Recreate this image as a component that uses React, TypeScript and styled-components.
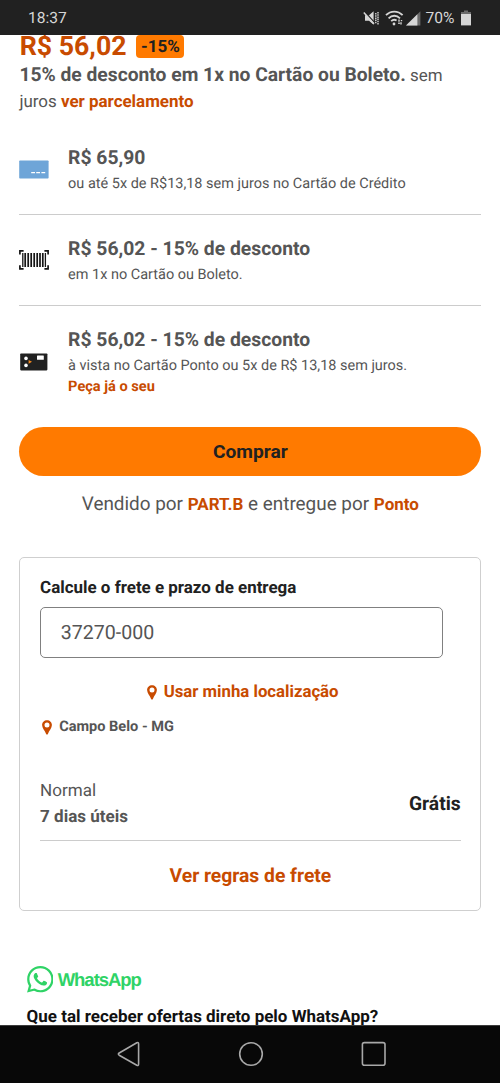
import React from "react";
import styled, { createGlobalStyle } from "styled-components";
import { SiWhatsapp } from "react-icons/si";

const rust = "#c84b00";
const grey = "#555555";

const GlobalStyle = createGlobalStyle`
  * { box-sizing: border-box; }
  html, body { margin: 0; padding: 0; background: #fff; }
  body {
    font-family: Roboto, "Liberation Sans", sans-serif;
    color: ${grey};
    text-rendering: geometricPrecision;
    -webkit-font-smoothing: antialiased;
  }
`;

const Phone = styled.div`
  width: 500px;
  height: 1083px;
  display: flex;
  flex-direction: column;
  overflow: hidden;
  background: #fff;
`;

const StatusBar = styled.header`
  flex: none;
  height: 35px;
  padding: 1px 29.5px 0 28px;
  display: flex;
  align-items: center;
  justify-content: space-between;
  background: #212121;
  color: #d6d6d6;
  font-size: 15.6px;
`;

const StatusIcons = styled.div`
  display: flex;
  align-items: center;
  svg { display: block; }
`;

const WifiSlot = styled.span`
  margin: 0 2px 0 5px;
`;

const BatteryLevel = styled.span`
  margin: 0 6px 0 5px;
`;

const Content = styled.main`
  flex: 1;
  min-height: 0;
  overflow: hidden;
  padding: 0 18.7px 0 19.4px;
  white-space: nowrap;
`;

const PriceLine = styled.div`
  display: flex;
  align-items: flex-start;
  gap: 9.8px;
  height: 26.6px;
`;

const Price = styled.strong`
  margin: -4px 0 0 0.3px;
  font-size: 26.7px;
  line-height: 30px;
  font-weight: 700;
  color: ${rust};
`;

const Badge = styled.span`
  width: 48px;
  height: 22.6px;
  border-radius: 4px;
  background: #ff7a00;
  color: #212121;
  font-size: 17px;
  line-height: 24px;
  font-weight: 700;
  text-align: center;
`;

const Discount = styled.p`
  margin: 0 0 8.4px;
  font-size: 16.95px;
  line-height: 26.4px;
`;

const DiscountStrong = styled.strong`
  font-size: 19.25px;
`;

const Link = styled.a<{ $size?: number }>`
  color: ${rust};
  font-weight: 700;
  font-size: ${(p) => (p.$size ? `${p.$size}px` : "inherit")};
  text-decoration: none;
`;

const PaymentRow = styled.section<{ $divided?: boolean }>`
  display: flex;
  align-items: center;
  padding: 20.3px 0 19.6px;
  border-bottom: ${(p) => (p.$divided ? "1px solid #cccccc" : "none")};
`;

const PaymentIcon = styled.div`
  flex: none;
  width: 48.7px;
  svg { display: block; }
`;

const PaymentTitle = styled.div`
  font-size: 19.32px;
  line-height: 28.6px;
  font-weight: 700;
`;

const PaymentNote = styled.div`
  font-size: 14.48px;
  line-height: 21.6px;
`;

const BuyButton = styled.button`
  display: block;
  width: 100%;
  height: 48.4px;
  margin-top: 9.7px;
  border: 0;
  border-radius: 25px;
  background: #ff7a00;
  color: #212121;
  font: 700 19.2px Roboto, "Liberation Sans", sans-serif;
`;

const Seller = styled.p`
  margin: 15.3px 0 0;
  text-align: center;
  font-size: 18.9px;
  line-height: 26px;
`;

const ShippingCard = styled.section`
  height: 353.6px;
  margin-top: 39.2px;
  padding: 19.9px 19.6px 0 19.7px;
  border: 1px solid #cfcfcf;
  border-radius: 5px;
`;

const CardTitle = styled.h2`
  margin: 0;
  font-size: 16.95px;
  line-height: 20px;
  font-weight: 700;
  color: #212121;
`;

const ZipField = styled.div`
  width: 402.7px;
  height: 50.5px;
  margin-top: 9px;
  padding-left: 19.7px;
  display: flex;
  align-items: center;
  border: 1px solid #808080;
  border-radius: 5px;
  font-size: 19.6px;
`;

const LocateLine = styled.div`
  display: flex;
  align-items: center;
  width: 402.5px;
  justify-content: center;
  margin-top: 22.7px;
  padding-left: 2.6px;
  gap: 7px;
  font-size: 16.75px;
  line-height: 24px;
`;

const CityLine = styled.div`
  display: flex;
  align-items: center;
  gap: 6.7px;
  margin-top: 13.2px;
  padding-left: 2.4px;
  font-size: 14.55px;
  line-height: 20px;
  font-weight: 700;
`;

const DeliveryRow = styled.div`
  display: flex;
  align-items: center;
  justify-content: space-between;
  margin-top: 41.8px;
  padding-bottom: 10px;
  border-bottom: 1px solid #cccccc;
  font-size: 17.05px;
  line-height: 25.5px;
`;

const FreeLabel = styled.strong`
  margin-top: -1.4px;
  font-size: 19.3px;
  color: #212121;
`;

const RulesLine = styled.div`
  margin-top: 22.3px;
  text-align: center;
  line-height: 24px;
`;

const WhatsAppBrand = styled.div`
  display: flex;
  align-items: center;
  gap: 4.3px;
  height: 27px;
  margin: 55.4px 0 0 7.4px;
  color: #2fd366;
  font-family: "Liberation Sans", Arial, sans-serif;
  font-size: 18.5px;
  font-weight: 700;
  letter-spacing: -1.03px;
`;

const OfferTitle = styled.h3`
  margin: 11.7px 0 0 7.2px;
  font-size: 16.98px;
  line-height: 24px;
  font-weight: 700;
  color: #111;
`;

const NavBar = styled.nav`
  flex: none;
  height: 58px;
  padding: 0 0 1px 1.2px;
  background: #080808;
  border-top: 1px solid #3c3c3c;
  display: flex;
  justify-content: center;
  align-items: center;
  gap: 97px;
  svg { display: block; }
`;

const MuteIcon = () => (
  <svg width="17" height="16" viewBox="0 0 17 16" fill="none" stroke="#d6d6d6">
    <path d="M10.6 1.2V14.8L6 10.8H2V5.2H6Z" fill="#d6d6d6" stroke="none" />
    <path d="M1.4 1.6 11.8 13" stroke="#212121" strokeWidth="1.5" />
    <path d="M.8 2.4 11 13.8" strokeWidth="1.5" />
    <path d="M12.8 3v10.4M15 2v12.4" strokeWidth="1.4" strokeDasharray="1.5 .7" />
  </svg>
);

const WifiIcon = () => (
  <svg width="19" height="16" viewBox="0 0 19 16" fill="none" stroke="#d6d6d6" strokeWidth="1.8" display="block">
    <path d="M1 5.2C5.6.3 13 .3 17.6 5.2M3.6 8.3c3.4-3.4 8-3.4 11.4 0M6.2 11.1c1.5-1.4 3.6-1.7 5.4-.6" />
    <circle cx="9" cy="14" r="1.4" fill="#d6d6d6" stroke="none" />
    <path d="M14 9.6v2.2M16 12.2v2.3M13.2 13.2h1.6M15.8 10.6h1.4" strokeWidth="1.4" />
  </svg>
);

const SignalIcon = () => (
  <svg width="15" height="15" viewBox="0 0 15 15">
    <path d="M0 14.6 14.4.2V14.6Z" fill="#6a6a6a" />
    <path d="M0 14.6 11.4 3.2V14.6Z" fill="#d6d6d6" />
  </svg>
);

const BatteryIcon = () => (
  <svg width="10" height="16" viewBox="0 0 10 16">
    <path d="M3 .4h4v1.6H10v3H0V2h3Z" fill="#6a6a6a" />
    <path d="M0 4h10v11.4H0Z" fill="#d6d6d6" />
  </svg>
);

const CreditCardIcon = () => (
  <svg width="30" height="19" viewBox="0 0 30 19">
    <rect x=".2" y=".4" width="29.4" height="18.2" rx=".8" fill="#6ea5d8" />
    <path d="M12.2 12.7H16M17.2 12.7H21M22.4 12.7h3.8" stroke="#fff" strokeWidth="1.3" />
  </svg>
);

const BarcodeIcon = () => (
  <svg width="30" height="20" viewBox="0 0 30 20" fill="none" stroke="#151515">
    <path d="M4.6.9H.9V4.5M25.4.9h3.7V4.5M4.6 18.9H.9V15.3M25.4 18.9h3.7V15.3" strokeWidth="1.7" />
    <path d="M3.8 3v14M26.4 3v14" strokeWidth="1.3" />
    <path d="M6.2 3v14M9.2 3v14M12.2 3v14M15.2 3v14M18.2 3v14M21 3v14M23.8 3v14" strokeWidth="1.7" />
  </svg>
);

const StoreCardIcon = () => (
  <svg width="30" height="18" viewBox="0 0 30 18">
    <rect x="1.2" y=".4" width="27.2" height="17" rx=".8" fill="#212121" />
    <circle cx="7" cy="5.4" r="1.8" fill="#fff" />
    <circle cx="7" cy="12.4" r="1.8" fill="#fff" />
    <path d="M9.6 6.9 13 8.8 9.6 10.7Z" fill="#f58a1f" />
    <rect x="18" y="2.4" width="6.8" height="4.4" rx=".5" fill="#fff" />
  </svg>
);

const PinIcon = () => (
  <svg width="10" height="15" viewBox="0 0 10 15">
    <path
      fillRule="evenodd"
      fill={rust}
      d="M5 .2C2.2.2.1 2.3.1 5c0 3 2.8 5.7 4 9 .3.8 1.5.8 1.8 0 1.2-3.3 4-6 4-9C9.9 2.3 7.8.2 5 .2Zm0 2.3a2.5 2.5 0 1 1 0 5 2.5 2.5 0 0 1 0-5Z"
    />
  </svg>
);

const payments = [
  { icon: <CreditCardIcon />, title: "R$ 65,90", note: "ou até 5x de R$13,18 sem juros no Cartão de Crédito" },
  { icon: <BarcodeIcon />, title: "R$ 56,02 - 15% de desconto", note: "em 1x no Cartão ou Boleto." },
  {
    icon: <StoreCardIcon />,
    title: "R$ 56,02 - 15% de desconto",
    note: "à vista no Cartão Ponto ou 5x de R$ 13,18 sem juros.",
    link: "Peça já o seu",
  },
];

export default function App() {
  return (
    <Phone>
      <GlobalStyle />
      <StatusBar>
        <span>18:37</span>
        <StatusIcons>
          <MuteIcon />
          <WifiSlot>
            <WifiIcon />
          </WifiSlot>
          <SignalIcon />
          <BatteryLevel>70%</BatteryLevel>
          <BatteryIcon />
        </StatusIcons>
      </StatusBar>
      <Content>
        <PriceLine>
          <Price>R$ 56,02</Price>
          <Badge>-15%</Badge>
        </PriceLine>
        <Discount>
          <DiscountStrong>15% de desconto em 1x no Cartão ou Boleto.</DiscountStrong> sem
          <br />
          juros <Link>ver parcelamento</Link>
        </Discount>
        {payments.map((p, i) => (
          <PaymentRow key={i} $divided={i < payments.length - 1}>
            <PaymentIcon>{p.icon}</PaymentIcon>
            <div>
              <PaymentTitle>{p.title}</PaymentTitle>
              <PaymentNote>{p.note}</PaymentNote>
              {p.link && (
                <PaymentNote>
                  <Link $size={14.58}>{p.link}</Link>
                </PaymentNote>
              )}
            </div>
          </PaymentRow>
        ))}
        <BuyButton>Comprar</BuyButton>
        <Seller>
          Vendido por <Link $size={17}>PART.B</Link> e entregue por <Link $size={17}>Ponto</Link>
        </Seller>
        <ShippingCard>
          <CardTitle>Calcule o frete e prazo de entrega</CardTitle>
          <ZipField>37270-000</ZipField>
          <LocateLine>
            <PinIcon />
            <Link>Usar minha localização</Link>
          </LocateLine>
          <CityLine>
            <PinIcon />
            Campo Belo - MG
          </CityLine>
          <DeliveryRow>
            <div>
              Normal
              <br />
              <strong>7 dias úteis</strong>
            </div>
            <FreeLabel>Grátis</FreeLabel>
          </DeliveryRow>
          <RulesLine>
            <Link $size={19.3}>Ver regras de frete</Link>
          </RulesLine>
        </ShippingCard>
        <WhatsAppBrand>
          <SiWhatsapp size={26.6} />
          WhatsApp
        </WhatsAppBrand>
        <OfferTitle>Que tal receber ofertas direto pelo WhatsApp?</OfferTitle>
      </Content>
      <NavBar>
        <svg width="26" height="26" viewBox="0 0 26 26" fill="none" stroke="#a8a8a8" strokeWidth="1.6" strokeLinejoin="round">
          <path d="M21.8 1.8 4.2 12q-1.6 1.1 0 2.2L21.8 24.2q1.8.8 1.8-1.2V3q0-2-1.8-1.2Z" />
        </svg>
        <svg width="26" height="26" viewBox="0 0 26 26" fill="none" stroke="#a8a8a8" strokeWidth="1.6">
          <circle cx="13" cy="13" r="11.3" />
        </svg>
        <svg width="26" height="26" viewBox="0 0 26 26" fill="none" stroke="#a8a8a8" strokeWidth="1.6">
          <rect x="1.4" y="1.6" width="22.6" height="22.6" rx="2" />
        </svg>
      </NavBar>
    </Phone>
  );
}
